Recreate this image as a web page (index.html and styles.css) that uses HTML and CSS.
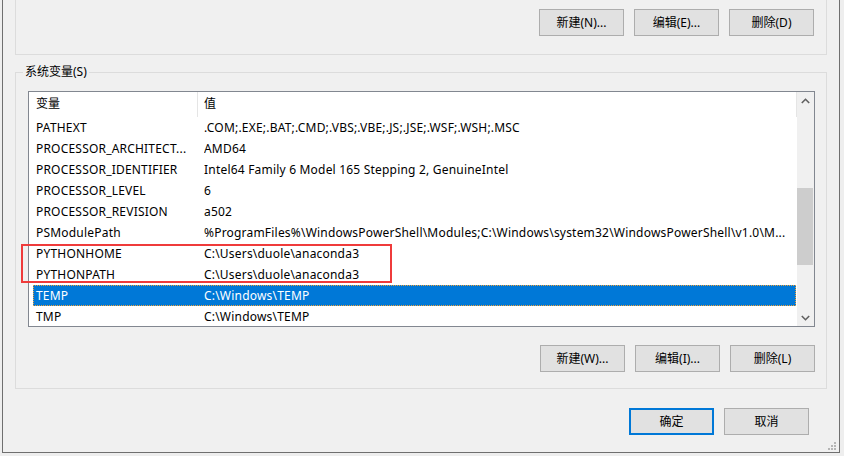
FILE: index.html
```html
<!DOCTYPE html>
<html lang="zh-CN">
<head>
<meta charset="utf-8">
<title>环境变量</title>
<link rel="stylesheet" href="styles.css">
</head>
<body>
<div class="window">
  <div class="group-top">
    <div class="btn-row">
      <button class="btn">新建(N)...</button>
      <button class="btn">编辑(E)...</button>
      <button class="btn">删除(D)</button>
    </div>
  </div>

  <fieldset class="group-sys">
    <legend class="group-title">系统变量(S)</legend>
    <div class="listview">
      <div class="lv-main">
        <div class="lv-header">
          <div class="lv-hcol1">变量</div>
          <div class="lv-hcol2">值</div>
        </div>
        <div class="lv-row"><span class="c1">PATHEXT</span><span class="c2">.COM;.EXE;.BAT;.CMD;.VBS;.VBE;.JS;.JSE;.WSF;.WSH;.MSC</span></div>
        <div class="lv-row"><span class="c1">PROCESSOR_ARCHITECT...</span><span class="c2">AMD64</span></div>
        <div class="lv-row"><span class="c1">PROCESSOR_IDENTIFIER</span><span class="c2">Intel64 Family 6 Model 165 Stepping 2, GenuineIntel</span></div>
        <div class="lv-row"><span class="c1">PROCESSOR_LEVEL</span><span class="c2">6</span></div>
        <div class="lv-row"><span class="c1">PROCESSOR_REVISION</span><span class="c2">a502</span></div>
        <div class="lv-row"><span class="c1">PSModulePath</span><span class="c2">%ProgramFiles%\WindowsPowerShell\Modules;C:\Windows\system32\WindowsPowerShell\v1.0\M...</span></div>
        <div class="lv-row"><span class="c1">PYTHONHOME</span><span class="c2">C:\Users\duole\anaconda3</span></div>
        <div class="lv-row"><span class="c1">PYTHONPATH</span><span class="c2">C:\Users\duole\anaconda3</span></div>
        <div class="lv-row selected"><span class="c1">TEMP</span><span class="c2">C:\Windows\TEMP</span></div>
        <div class="lv-row"><span class="c1">TMP</span><span class="c2">C:\Windows\TEMP</span></div>
      </div>
      <div class="scrollbar">
        <div class="sb-btn">
          <svg width="9" height="6" viewBox="0 0 9 6"><polyline points="0.8,5 4.5,1.3 8.2,5" fill="none" stroke="#606060" stroke-width="1.6"/></svg>
        </div>
        <div class="sb-track"><div class="sb-thumb"></div></div>
        <div class="sb-btn">
          <svg width="9" height="6" viewBox="0 0 9 6"><polyline points="0.8,1 4.5,4.7 8.2,1" fill="none" stroke="#606060" stroke-width="1.6"/></svg>
        </div>
      </div>
    </div>
    <div class="btn-row btn-row-sys">
      <button class="btn">新建(W)...</button>
      <button class="btn">编辑(I)...</button>
      <button class="btn">删除(L)</button>
    </div>
  </fieldset>

  <div class="dialog-buttons">
    <button class="btn btn-default">确定</button>
    <button class="btn">取消</button>
  </div>

  <svg class="grip" width="8" height="8" viewBox="0 0 8 8">
    <rect x="6" y="0" width="2" height="2" fill="#b5b5b5"/>
    <rect x="3" y="3" width="2" height="2" fill="#b5b5b5"/>
    <rect x="6" y="3" width="2" height="2" fill="#b5b5b5"/>
    <rect x="0" y="6" width="2" height="2" fill="#b5b5b5"/>
    <rect x="3" y="6" width="2" height="2" fill="#b5b5b5"/>
    <rect x="6" y="6" width="2" height="2" fill="#b5b5b5"/>
  </svg>

  <div class="annotation"></div>
</div>
</body>
</html>
```

FILE: styles.css
```css
* {
  box-sizing: border-box;
}

html, body {
  margin: 0;
  padding: 0;
}

body {
  width: 844px;
  height: 456px;
  overflow: hidden;
  background: #eeeeee;
  font-family: "Noto Sans", "Noto Sans CJK SC", sans-serif;
  font-size: 12px;
  color: #000;
}

.window {
  position: relative;
  margin-left: 2px;
  width: 838px;
  background: #f0f0f0;
  border-left: 1px solid #6f6f6f;
  border-right: 1px solid #6f6f6f;
  border-bottom: 1px solid #6f6f6f;
  padding: 0 30px 17px 12px;
}

.group-top {
  width: 812px;
  border: 1px solid #dcdcdc;
  border-top: none;
  padding: 9px 12px 18px 0;
}

.btn-row {
  display: flex;
  justify-content: flex-end;
  gap: 10px;
}

.btn {
  width: 85px;
  height: 27px;
  margin: 0;
  padding: 0;
  background: #e1e1e1;
  border: 1px solid #adadad;
  font-family: "Noto Sans", "Noto Sans CJK SC", sans-serif;
  font-size: 12px;
  color: #000;
  line-height: 25px;
  text-align: center;
}

.btn-default {
  border: 2px solid #0078d7;
  line-height: 23px;
}

.group-sys {
  width: 812px;
  min-width: 0;
  margin: 9px 0 0 0;
  border: 1px solid #dcdcdc;
  padding: 11px 11px 16px 12px;
}

.group-title {
  margin-left: -5px;
  padding: 0 2px;
  height: 16px;
  line-height: 16px;
  font-size: 12px;
}

.listview {
  display: flex;
  width: 787px;
  height: 236px;
  border: 1px solid #828790;
  background: #fff;
  overflow: hidden;
}

.lv-main {
  width: 768px;
  flex: none;
}

.lv-header {
  display: flex;
  height: 25px;
  line-height: 24px;
}

.lv-hcol1 {
  width: 169px;
  padding-left: 7px;
  border-right: 1px solid #e5e5e5;
}

.lv-hcol2 {
  flex: 1;
  padding-left: 6px;
  border-right: 1px solid #e5e5e5;
}

.lv-row {
  display: flex;
  height: 21px;
  line-height: 21px;
  margin: 0 1px 0 4px;
  white-space: nowrap;
  overflow: hidden;
  letter-spacing: 0.2px;
}

.lv-row .c1 {
  width: 171px;
  flex: none;
  padding-left: 3px;
  overflow: hidden;
}

.lv-row .c2 {
  flex: 1;
  overflow: hidden;
}

.lv-row.selected {
  background: #0078d7;
  color: #fff;
  outline: 1px dotted #f0a23a;
  outline-offset: -1px;
}

.scrollbar {
  width: 17px;
  flex: none;
  display: flex;
  flex-direction: column;
  background: #f0f0f0;
}

.sb-btn {
  height: 17px;
  flex: none;
  display: flex;
  align-items: center;
  justify-content: center;
}

.sb-track {
  flex: 1;
  padding-top: 79px;
}

.sb-thumb {
  height: 77px;
  margin: 0 1px 0 0;
  background: #cdcdcd;
}

.btn-row-sys {
  margin-top: 18px;
}

.dialog-buttons {
  display: flex;
  justify-content: flex-end;
  gap: 10px;
  margin-top: 19px;
}

.grip {
  position: absolute;
  left: 825px;
  top: 442px;
}

.annotation {
  position: absolute;
  left: 18px;
  top: 244px;
  width: 371px;
  height: 39px;
  border: 2px solid #ef3b3b;
}
```
